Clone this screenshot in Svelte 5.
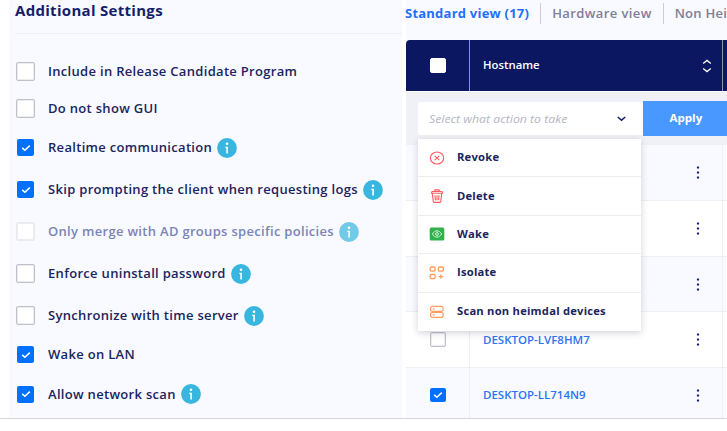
<script lang="ts">
  let settings = $state([
    { label: 'Include in Release Candidate Program', checked: false, info: false },
    { label: 'Do not show GUI', checked: false, info: false },
    { label: 'Realtime communication', checked: true, info: true },
    { label: 'Skip prompting the client when requesting logs', checked: true, info: true },
    { label: 'Only merge with AD groups specific policies', checked: false, info: true, disabled: true },
    { label: 'Enforce uninstall password', checked: false, info: true },
    { label: 'Synchronize with time server', checked: false, info: true },
    { label: 'Wake on LAN', checked: true, info: false },
    { label: 'Allow network scan', checked: true, info: true }
  ]);

  let rows = $state([
    { host: '', checked: false },
    { host: '', checked: false },
    { host: '', checked: false },
    { host: 'DESKTOP-LVF8HM7', checked: false },
    { host: 'DESKTOP-LL714N9', checked: true }
  ]);

  const actions = [
    { id: 'revoke', label: 'Revoke' },
    { id: 'delete', label: 'Delete' },
    { id: 'wake', label: 'Wake' },
    { id: 'isolate', label: 'Isolate' },
    { id: 'scan', label: 'Scan non heimdal devices' }
  ];

  let open = $state(true);
</script>

{#snippet tick()}
  <svg width="10" height="8" viewBox="0 0 10 8" fill="none" stroke="#fff" stroke-width="1.5" aria-hidden="true">
    <path d="M1.2 3.9 3.9 6.3 8.8 1.6" />
  </svg>
{/snippet}

<div class="page">
  <section class="settings">
    <h2>Additional Settings</h2>
    <div class="options">
      {#each settings as item}
        <div class="option" class:with-info={item.info} class:disabled={item.disabled}>
          <button
            class="box"
            class:checked={item.checked}
            role="checkbox"
            aria-checked={item.checked}
            aria-label={item.label}
            disabled={item.disabled}
            onclick={() => (item.checked = !item.checked)}
          >
            {#if item.checked}{@render tick()}{/if}
          </button>
          <span class="label">{item.label}</span>
          {#if item.info}
            <svg class="info" width="20" height="20" viewBox="0 0 20 20" aria-hidden="true">
              <circle cx="10" cy="10" r="9.9" fill="#38b6df" />
              <circle cx="10" cy="5.8" r="1.3" fill="#fff" />
              <path d="M8.3 8.8h2.6v6.8H9.3V9.9h-1z" fill="#fff" />
            </svg>
          {/if}
        </div>
      {/each}
    </div>
  </section>

  <section class="devices">
    <nav class="tabs">
      <span class="tab active">Standard view (17)</span>
      <span class="tab">Hardware view</span>
      <span class="tab last">Non Hei</span>
    </nav>

    <div class="row head">
      <div class="cell pick"><span class="box small"></span></div>
      <div class="cell name">
        <span class="hostname">Hostname</span>
        <svg width="10" height="14" viewBox="0 0 10 14" fill="none" stroke="#fff" stroke-width="1.3" aria-hidden="true">
          <path d="M1.2 4.4 5 1.4l3.8 3M1.2 9.6l3.8 3 3.8-3" />
        </svg>
      </div>
      <div class="cell"></div>
    </div>

    <div class="toolbar">
      <button class="select" onclick={() => (open = !open)}>
        <span class="placeholder">Select what action to take</span>
        <svg width="9" height="6" viewBox="0 0 9 6" fill="none" stroke="#141f6b" stroke-width="1.6" aria-hidden="true">
          <path d="M.8 1 4.5 4.3 8.2 1" />
        </svg>
      </button>
      <button class="apply"><span>Apply</span></button>

      {#if open}
        <ul class="menu">
          {#each actions as action}
            <li>
              <svg width="16" height="14" viewBox="0 0 16 14" fill="none" aria-hidden="true">
                {#if action.id === 'revoke'}
                  <g stroke="#ff5c62" stroke-width="1.1">
                    <ellipse cx="8" cy="7" rx="6.7" ry="6" />
                    <path d="m5.7 4.8 4.6 4.4m0-4.4L5.7 9.2" />
                  </g>
                {:else if action.id === 'delete'}
                  <g stroke="#ff5c62" stroke-width="1.1">
                    <path d="M2.4 4.3 3 2.5h10l.6 1.8zM5.4 2.4 6 .9h4l.6 1.5M3.3 4.5l1 8.1q.1.8 1 .8h5.4q.9 0 1-.8l1-8.1M6 6.3l.4 4.9M8 6.3v4.9M10 6.3l-.4 4.9" />
                  </g>
                {:else if action.id === 'wake'}
                  <rect x=".7" y=".4" width="14.6" height="13.2" rx="1.6" fill="#30b24a" />
                  <path d="M3.4 7c2.4-4.2 6.8-4.2 9.2 0-2.4 4.2-6.8 4.2-9.2 0z" stroke="#d8f5dc" />
                  <circle cx="8" cy="7" r="1.4" stroke="#d8f5dc" />
                {:else if action.id === 'isolate'}
                  <g stroke="#ff9c5b" stroke-width="1.3">
                    <rect x="1.2" y="1" width="4.9" height="4.2" rx="1.3" />
                    <rect x="9.4" y="1" width="4.9" height="4.2" rx="1.3" />
                    <rect x="1.2" y="8.5" width="4.9" height="4.2" rx="1.3" />
                    <path d="M11.9 8.6v4.2M9.6 10.7h4.6" />
                  </g>
                {:else}
                  <g stroke="#ff9c5b" stroke-width="1.2">
                    <rect x="1.5" y="1.3" width="12.6" height="5.1" rx="2" />
                    <rect x="1.5" y="7.3" width="12.6" height="5.1" rx="2" />
                    <path d="M3.8 3.9h1.8M3.8 9.9h1.8" />
                  </g>
                {/if}
              </svg>
              <span>{action.label}</span>
            </li>
          {/each}
        </ul>
      {/if}
    </div>

    {#each rows as row}
      <div class="row">
        <div class="cell pick">
          <button
            class="box small"
            class:checked={row.checked}
            role="checkbox"
            aria-checked={row.checked}
            aria-label="Select device"
            onclick={() => (row.checked = !row.checked)}
          >
            {#if row.checked}{@render tick()}{/if}
          </button>
        </div>
        <div class="cell name">
          <span class="host">{row.host}</span>
          <svg class="dots" width="4" height="13" viewBox="0 0 4 13" fill="#141f6b" aria-hidden="true">
            <rect x=".9" y=".4" width="2.2" height="2.2" rx=".5" />
            <rect x=".9" y="5.4" width="2.2" height="2.2" rx=".5" />
            <rect x=".9" y="10.4" width="2.2" height="2.2" rx=".5" />
          </svg>
        </div>
        <div class="cell"></div>
      </div>
    {/each}
  </section>
</div>

<style>
  :global(body) {
    background: #fff;
    overflow: hidden;
  }

  .page {
    display: flex;
    gap: 4px;
    box-sizing: border-box;
    width: 727px;
    height: 419px;
    padding-left: 9px;
    overflow: hidden;
    border-bottom: 1px solid #d6d7dc;
    font-family: 'Open Sans', sans-serif;
    color: #1b2560;
  }

  button {
    font-family: inherit;
    padding: 0;
    cursor: pointer;
  }

  svg {
    flex: none;
    display: block;
  }

  .settings {
    flex: none;
    width: 393px;
    background: #f9faff;
  }

  h2 {
    box-sizing: border-box;
    height: 34px;
    margin: 0 0 19.5px 6px;
    border-bottom: 1px solid #eeeff4;
    font-size: 15px;
    line-height: 20px;
    font-weight: 700;
    letter-spacing: 0.3px;
    white-space: nowrap;
    color: #141f6b;
  }

  .option {
    display: flex;
    align-items: center;
    height: 36.5px;
    padding-left: 7px;
  }

  .with-info {
    height: 42px;
  }

  .label {
    margin-left: 13px;
    padding-bottom: 1px;
    font-size: 13px;
    line-height: 18px;
    font-weight: 600;
    letter-spacing: 0.31px;
    white-space: nowrap;
  }

  .disabled .label {
    color: #7c84b4;
  }

  .disabled .box {
    border-color: #e9eaef;
  }

  .disabled .info {
    opacity: 0.7;
  }

  .info {
    margin-left: 5px;
  }

  .box {
    flex: none;
    display: flex;
    align-items: center;
    justify-content: center;
    box-sizing: border-box;
    width: 19px;
    height: 19px;
    border: 1px solid #bfc0ca;
    border-radius: 2px;
    background: #fff;
    box-shadow: inset 0 0 0 1px #ecedf1;
  }

  .box.checked {
    width: 17px;
    height: 17px;
    margin: 0 1px;
    border: none;
    background: #0070ff;
    box-shadow: none;
  }

  .box.small {
    width: 16px;
    height: 15px;
    margin: 0;
  }

  .box.small.checked {
    height: 14px;
  }

  .devices {
    flex: 1;
    min-width: 0;
  }

  .tabs {
    display: flex;
    align-items: center;
    height: 40px;
    box-sizing: border-box;
    padding-bottom: 13px;
    background: #f9faff;
  }

  .tab {
    flex: none;
    height: 21px;
    margin-right: 11px;
    padding-right: 11px;
    border-right: 1px solid #cacbd4;
    font-size: 13px;
    line-height: 20px;
    font-weight: 600;
    letter-spacing: 0.4px;
    white-space: nowrap;
    color: #7d8096;
  }

  .tab.active {
    margin-left: -1px;
    font-weight: 700;
    letter-spacing: 0.23px;
    color: #1f70fb;
  }

  .tab.last {
    margin: 0;
    padding: 0;
    border: none;
    letter-spacing: 0.25px;
  }

  .row {
    display: grid;
    grid-template-columns: 64px 253px 1fr;
    height: 55.7px;
    box-sizing: border-box;
    border-bottom: 1px solid #eeeff4;
    background: #fff;
  }

  .row:nth-child(even) {
    background: #f9faff;
  }

  .cell {
    box-sizing: border-box;
    display: flex;
    align-items: center;
    border-right: 1px solid #eeeff4;
  }

  .cell:last-child {
    border: none;
  }

  .pick {
    padding-left: 24px;
  }

  .name {
    justify-content: space-between;
    padding: 0 10px 0 13px;
  }

  .row.head {
    height: 52px;
    border-bottom: 1px solid #fff;
    border-radius: 4px 0 0;
    background: #0b1760;
  }

  .head .cell {
    border-color: #8e94b9;
  }

  .head .box {
    border-color: #fff;
    box-shadow: none;
  }

  .hostname {
    padding-bottom: 1px;
    font-size: 10.5px;
    font-weight: 600;
    color: #fff;
    transform: scaleX(1.08);
    transform-origin: left;
  }

  .host {
    padding-bottom: 1px;
    font-size: 11px;
    font-weight: 600;
    color: #2b74f5;
    transform: scaleX(1.045);
    transform-origin: left;
  }

  .dots {
    margin-right: 12px;
  }

  .toolbar {
    position: relative;
    display: flex;
    align-items: center;
    height: 53.3px;
    box-sizing: border-box;
    padding-left: 12px;
    background: #f0f1f6;
  }

  .select {
    display: flex;
    align-items: center;
    justify-content: space-between;
    width: 225px;
    height: 33px;
    padding: 0 17px 0 11px;
    border: none;
    border-radius: 2px 0 0 2px;
    background: #fff;
  }

  .placeholder {
    padding-bottom: 1px;
    font-size: 11px;
    font-style: italic;
    color: #b4b6c2;
    transform: scaleX(1.115);
    transform-origin: left;
  }

  .apply {
    flex: 1;
    height: 35px;
    padding: 0 0 1px 2px;
    border: none;
    background: #4998ff;
    font-size: 10.5px;
    font-weight: 700;
    color: #fff;
  }

  .apply span {
    display: inline-block;
    transform: scaleX(1.1);
  }

  .menu {
    position: absolute;
    z-index: 5;
    top: 47px;
    left: 12px;
    box-sizing: border-box;
    width: 223px;
    height: 192px;
    margin: 0;
    padding: 0;
    list-style: none;
    background: #fff;
    box-shadow: 0 2px 7px rgba(30, 34, 60, 0.2);
  }

  .menu li {
    display: flex;
    align-items: center;
    gap: 12px;
    box-sizing: border-box;
    height: 38.4px;
    padding-left: 11px;
    border-bottom: 1px solid #eeeef2;
  }

  .menu li:last-child {
    border: none;
  }

  .menu span {
    padding-bottom: 1px;
    font-size: 10px;
    font-weight: 700;
    letter-spacing: 0.2px;
    white-space: nowrap;
    transform: scaleX(1.12);
    transform-origin: left;
  }
</style>
